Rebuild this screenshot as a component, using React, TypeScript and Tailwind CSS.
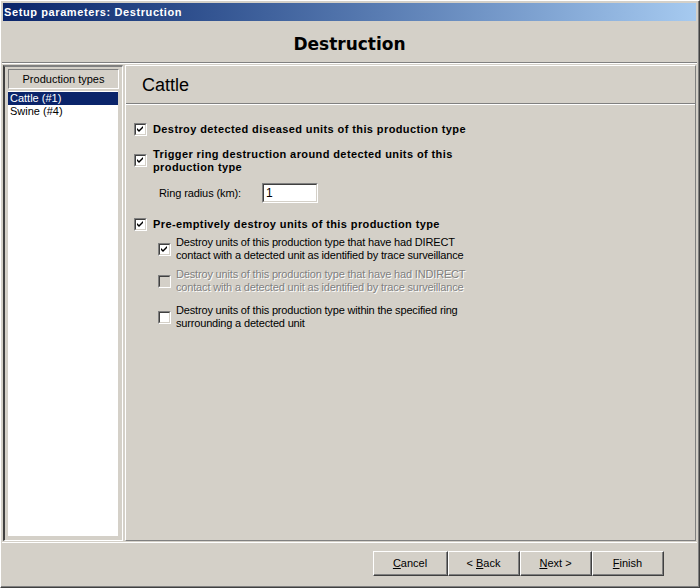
import React from "react";

const font = { fontFamily: '"Liberation Sans", Arial, sans-serif' };

function Check({ checked, disabled }: { checked?: boolean; disabled?: boolean }) {
  return (
    <div className="w-[13px] h-[13px] shrink-0 border-t border-l border-t-[#808080] border-l-[#808080] border-b border-r border-b-white border-r-white">
      <div
        className={`w-full h-full border-t border-l border-t-[#404040] border-l-[#404040] border-b border-r border-b-[#d4d0c8] border-r-[#d4d0c8] flex items-center justify-center ${
          disabled ? "bg-[#d4d0c8]" : "bg-white"
        }`}
      >
        {checked && (
          <svg width="7" height="7" viewBox="0 0 7 7">
            <path d="M0 2 L2 4 L6 0 L6 2 L2 6 L0 4 Z" fill="#000" />
          </svg>
        )}
      </div>
    </div>
  );
}

function Btn({ label, u, pre, post }: { label: string; u: string; pre?: string; post?: string }) {
  return (
    <div className="h-[25px] border-t border-l border-t-white border-l-white border-b border-r border-b-[#404040] border-r-[#404040]">
      <div className="h-full w-full border-b border-r border-b-[#808080] border-r-[#808080] flex items-center justify-center text-[11px] text-black">
        <span className="whitespace-pre">
          {pre}
          <span className="underline">{u}</span>
          {label}
          {post}
        </span>
      </div>
    </div>
  );
}

export default function App() {
  return (
    <div
      className="w-[700px] h-[588px] bg-[#d4d0c8] border-t border-l border-t-white border-l-white border-b border-r border-b-[#404040] border-r-[#404040] flex flex-col select-none"
      style={font}
    >
      <div className="flex-1 flex flex-col border-b border-r border-b-[#808080] border-r-[#808080] p-[1px]">
        {/* title bar */}
        <div className="h-[18px] mx-[1px] mt-[1px] bg-gradient-to-r from-[#0a246a] to-[#a6caf0] flex items-center px-[1px]">
          <span className="text-white font-bold text-[11px] tracking-[0.6px]">Setup parameters: Destruction</span>
        </div>

        {/* header */}
        <div className="h-[41px] mt-[1px] pt-[5px] flex items-center justify-center border-b border-b-[#808080]">
          <span className="text-[17px] font-bold text-black" style={{ fontFamily: '"DejaVu Sans", "Liberation Sans", sans-serif' }}>
            Destruction
          </span>
        </div>

        <div className="border-t border-t-white flex-1 flex flex-col">
          <div className="flex flex-1 pt-[1px]">
            {/* left panel */}
            <div className="w-[120px] ml-[1px] border-t-2 border-l-2 border-t-[#808080] border-l-[#404040] border-b border-r border-b-white border-r-white flex flex-col">
              <div className="border-b border-r border-b-[#d4d0c8] border-r-[#d4d0c8] flex-1 flex flex-col p-[2px]">
                <div className="h-[20px] ml-[1px] border-t border-l border-t-[#808080] border-l-[#808080] border-b border-r border-b-white border-r-white flex items-center justify-center text-[11px] text-black">
                  Production types
                </div>
                <div className="flex-1 bg-white mt-[1px] border border-[#d4d0c8] flex flex-col pt-[1px] text-[11px]">
                  <div className="h-[13px] bg-[#0a246a] text-white leading-[13px] pl-[2px]">Cattle (#1)</div>
                  <div className="h-[13px] text-black leading-[13px] pl-[2px]">Swine (#4)</div>
                </div>
              </div>
            </div>

            {/* right panel */}
            <div className="flex-1 ml-[2px] mr-[1px] border-t border-l border-t-white border-l-white border-b border-r border-b-[#808080] border-r-[#808080] flex flex-col">
              <div className="h-[37px] mt-[1px] flex items-center pl-[16px] border-b border-b-[#808080]">
                <span className="text-[18px] text-black">Cattle</span>
              </div>
              <div className="flex-1 border-t border-t-white pl-[8px] pt-[17px] text-[11px] text-black">
                <div className="flex items-center gap-[6px] h-[14px]">
                  <Check checked />
                  <span className="font-bold tracking-[0.4px]">Destroy detected diseased units of this production type</span>
                </div>

                <div className="flex items-start gap-[6px] mt-[12px]">
                  <div className="mt-[6px]">
                    <Check checked />
                  </div>
                  <span className="font-bold leading-[13px] tracking-[0.4px]">
                    Trigger ring destruction around detected units of this
                    <br />
                    production type
                  </span>
                </div>

                <div className="flex items-center mt-[9px] ml-[25px] h-[20px]">
                  <span className="w-[103px] tracking-[-0.1px]">Ring radius (km):</span>
                  <div className="w-[56px] h-[20px] border-t border-l border-t-[#808080] border-l-[#808080] border-b border-r border-b-white border-r-white">
                    <div className="w-full h-full bg-white border-t border-l border-t-[#404040] border-l-[#404040] border-b border-r border-b-[#d4d0c8] border-r-[#d4d0c8] pl-[2px] text-[12px] leading-[17px]">
                      1
                    </div>
                  </div>
                </div>

                <div className="flex items-center gap-[6px] h-[14px] mt-[14px]">
                  <Check checked />
                  <span className="font-bold tracking-[0.4px]">Pre-emptively destroy units of this production type</span>
                </div>

                <div className="ml-[24px] mt-[5px] flex flex-col tracking-[-0.17px]">
                  <div className="flex items-start gap-[5px]">
                    <div className="mt-[7px]">
                      <Check checked />
                    </div>
                    <span className="leading-[13px]">
                      Destroy units of this production type that have had DIRECT
                      <br />
                      contact with a detected unit as identified by trace surveillance
                    </span>
                  </div>
                  <div className="flex items-start gap-[5px] mt-[6px]">
                    <div className="mt-[7px]">
                      <Check disabled />
                    </div>
                    <span className="leading-[13px] text-[#808080]" style={{ textShadow: "1px 1px 0 #fff" }}>
                      Destroy units of this production type that have had INDIRECT
                      <br />
                      contact with a detected unit as identified by trace surveillance
                    </span>
                  </div>
                  <div className="flex items-start gap-[5px] mt-[10px]">
                    <div className="mt-[7px]">
                      <Check />
                    </div>
                    <span className="leading-[13px]">
                      Destroy units of this production type within the specified ring
                      <br />
                      surrounding a detected unit
                    </span>
                  </div>
                </div>
              </div>
            </div>
          </div>

          {/* button bar */}
          <div className="h-[43px] mt-[1px] border-t border-t-white flex items-start pl-[371px] pt-[8px]">
            <div className="w-[75px]"><Btn u="C" label="ancel" /></div>
            <div className="w-[72px]"><Btn pre="< " u="B" label="ack" /></div>
            <div className="w-[72px]"><Btn u="N" label="ext" post=" >" /></div>
            <div className="w-[72px]"><Btn u="F" label="inish" /></div>
          </div>
        </div>
      </div>
    </div>
  );
}
